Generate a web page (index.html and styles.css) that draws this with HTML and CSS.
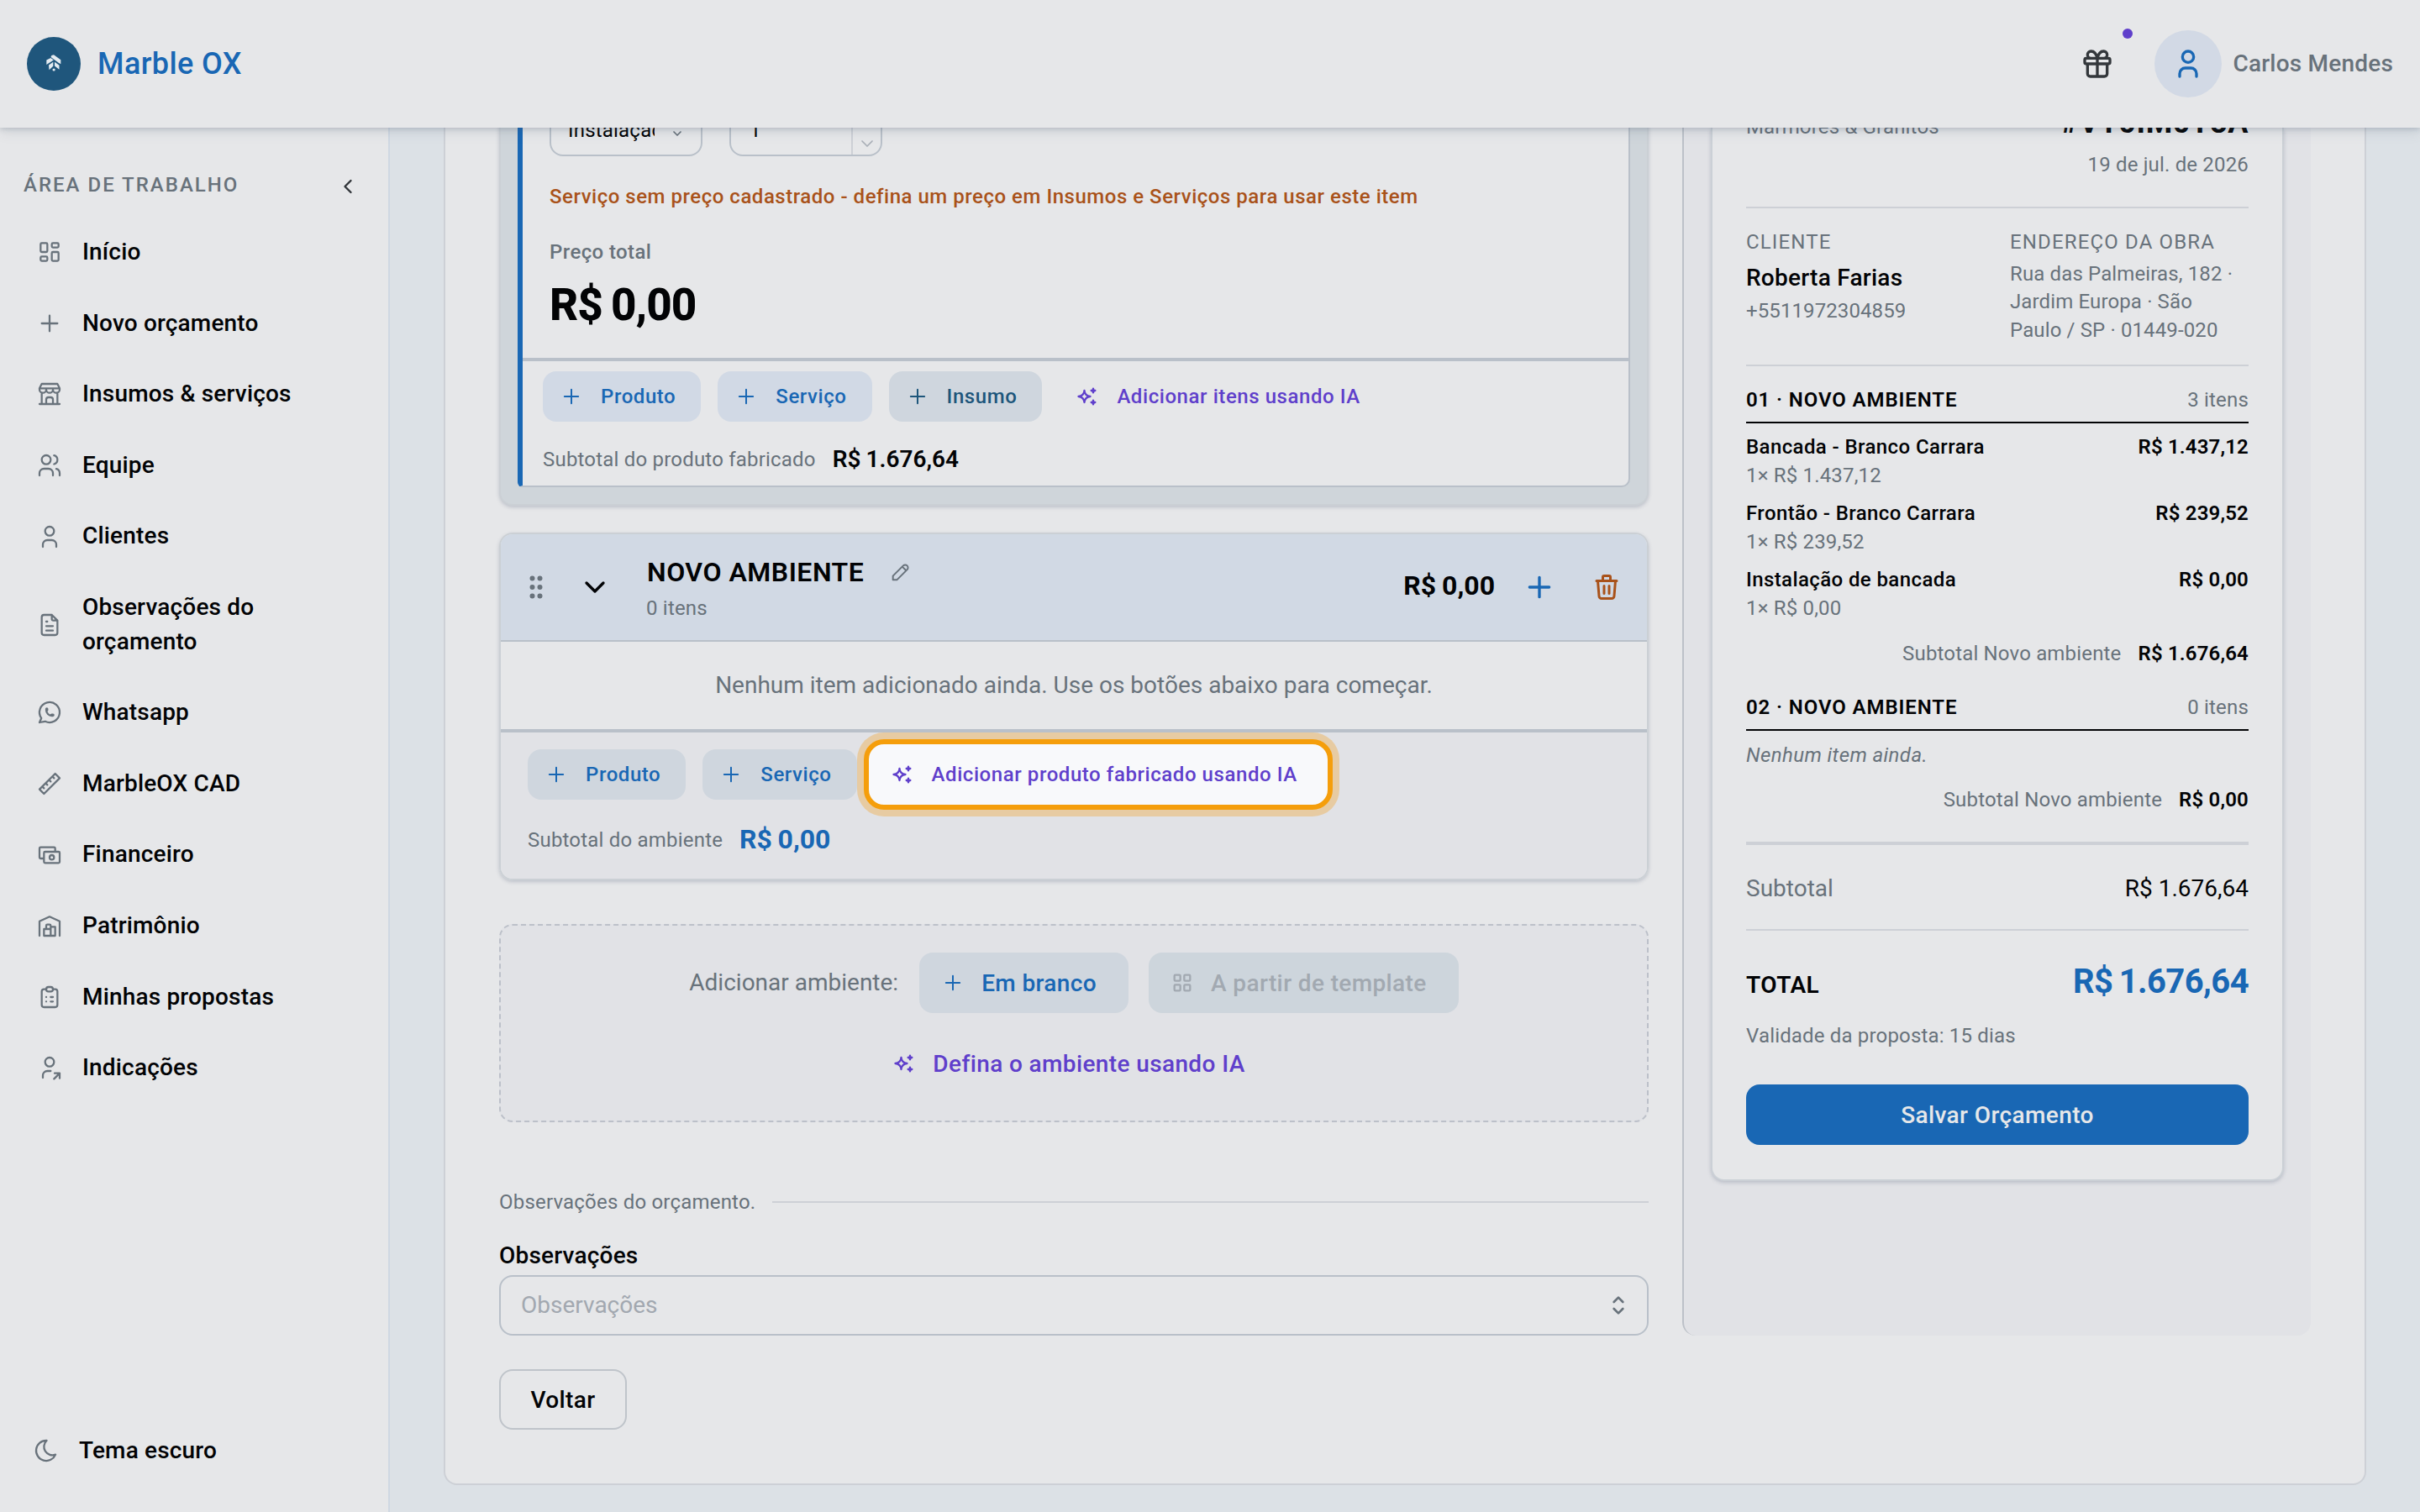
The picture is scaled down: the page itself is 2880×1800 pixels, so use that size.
FILE: index.html
```html
<!DOCTYPE html>
<html lang="pt-BR">
<head>
<meta charset="utf-8">
<title>Marble OX</title>
<link rel="stylesheet" href="styles.css">
</head>
<body>
<svg class="defs" aria-hidden="true">
  <symbol id="plus" viewBox="0 0 24 24"><path d="M12 5v14M5 12h14"/></symbol>
  <symbol id="sparkles" viewBox="0 0 24 24"><path d="M16 18a2 2 0 0 1 2 2a2 2 0 0 1 2 -2a2 2 0 0 1 -2 -2a2 2 0 0 1 -2 2zm0 -12a2 2 0 0 1 2 2a2 2 0 0 1 2 -2a2 2 0 0 1 -2 -2a2 2 0 0 1 -2 2zm-7 12a6 6 0 0 1 6 -6a6 6 0 0 1 -6 -6a6 6 0 0 1 -6 6a6 6 0 0 1 6 6z"/></symbol>
  <symbol id="user" viewBox="0 0 24 24"><path d="M8 7a4 4 0 1 0 8 0a4 4 0 0 0 -8 0M6 21v-2a4 4 0 0 1 4 -4h4a4 4 0 0 1 4 4v2"/></symbol>
  <symbol id="selector" viewBox="0 0 24 24"><path d="M8 9l4 -4l4 4M16 15l-4 4l-4 -4"/></symbol>
  <symbol id="chevron-down" viewBox="0 0 24 24"><path d="M6 9l6 6l6 -6"/></symbol>
</svg>

<header class="topbar">
  <div class="brand">
    <svg class="logo" viewBox="0 0 64 64"><circle cx="32" cy="32" r="32" fill="#1f567c"/><g fill="#e4ebf1"><path d="M29.300 22l2.700 -.700l8.300 6v5l-2.600 -1.600l-9.200 -6.600z"/><path d="M23.300 27.500l5 -2.600l3.500 2.600l-8.500 5.600z"/><path d="M26 33.500l5.300 -3.800v5l-4.800 4.600z"/><path d="M33 29.800l5.500 4v5l-5.500 -4.400z"/><circle cx="32.100" cy="39" r="1.600"/></g></svg>
    <span class="brand-name">Marble OX</span>
  </div>
  <div class="account">
    <div class="gift">
      <svg class="icon i40" viewBox="0 0 24 24"><path d="M3 9a1 1 0 0 1 1 -1h16a1 1 0 0 1 1 1v2a1 1 0 0 1 -1 1h-16a1 1 0 0 1 -1 -1zM12 8v13M19 12v7a2 2 0 0 1 -2 2h-10a2 2 0 0 1 -2 -2v-7M7.500 8a2.500 2.500 0 0 1 0 -5a4.800 8 0 0 1 4.500 5a4.800 8 0 0 1 4.500 -5a2.500 2.500 0 0 1 0 5"/></svg>
      <span class="dot"></span>
    </div>
    <div class="avatar"><svg class="icon i40"><use href="#user"/></svg></div>
    <span class="account-name">Carlos Mendes</span>
  </div>
</header>

<div class="layout">
  <aside class="sidebar">
    <div class="side-head"><span>ÁREA DE TRABALHO</span><svg class="icon i28" viewBox="0 0 24 24"><path d="M15 6l-6 6l6 6"/></svg></div>
    <nav class="nav">
      <a><svg class="icon thin i32" viewBox="0 0 24 24"><path d="M5 4h4a1 1 0 0 1 1 1v6a1 1 0 0 1 -1 1h-4a1 1 0 0 1 -1 -1v-6a1 1 0 0 1 1 -1M5 16h4a1 1 0 0 1 1 1v2a1 1 0 0 1 -1 1h-4a1 1 0 0 1 -1 -1v-2a1 1 0 0 1 1 -1M15 12h4a1 1 0 0 1 1 1v6a1 1 0 0 1 -1 1h-4a1 1 0 0 1 -1 -1v-6a1 1 0 0 1 1 -1M15 4h4a1 1 0 0 1 1 1v2a1 1 0 0 1 -1 1h-4a1 1 0 0 1 -1 -1v-2a1 1 0 0 1 1 -1"/></svg><span>Início</span></a>
      <a><svg class="icon thin i32"><use href="#plus"/></svg><span>Novo orçamento</span></a>
      <a><svg class="icon thin i32" viewBox="0 0 24 24"><path d="M3 21h18M3 7v1a3 3 0 0 0 6 0v-1m0 1a3 3 0 0 0 6 0v-1m0 1a3 3 0 0 0 6 0v-1h-18l2 -4h14l2 4M5 21v-10.150M19 21v-10.150M9 21v-4a2 2 0 0 1 2 -2h2a2 2 0 0 1 2 2v4"/></svg><span>Insumos &amp; serviços</span></a>
      <a><svg class="icon thin i32" viewBox="0 0 24 24"><path d="M5 7a4 4 0 1 0 8 0a4 4 0 1 0 -8 0M3 21v-2a4 4 0 0 1 4 -4h4a4 4 0 0 1 4 4v2M16 3.130a4 4 0 0 1 0 7.750M21 21v-2a4 4 0 0 0 -3 -3.850"/></svg><span>Equipe</span></a>
      <a><svg class="icon thin i32"><use href="#user"/></svg><span>Clientes</span></a>
      <a><svg class="icon thin i32" viewBox="0 0 24 24"><path d="M14 3v4a1 1 0 0 0 1 1h4M17 21h-10a2 2 0 0 1 -2 -2v-14a2 2 0 0 1 2 -2h7l5 5v11a2 2 0 0 1 -2 2zM9 9h1M9 13h6M9 17h6"/></svg><span>Observações do orçamento</span></a>
      <a><svg class="icon thin i32" viewBox="0 0 24 24"><path d="M3 21l1.650 -3.800a9 9 0 1 1 3.400 2.900l-5.050 .9M9 10a.5 .5 0 0 0 1 0v-1a.5 .5 0 0 0 -1 0v1a5 5 0 0 0 5 5h1a.5 .5 0 0 0 0 -1h-1a.5 .5 0 0 0 0 1"/></svg><span>Whatsapp</span></a>
      <a><svg class="icon thin i32" viewBox="0 0 24 24"><path d="M17 3l4 4l-14 14l-4 -4zM16 7l-1.500 -1.500M13 10l-1.500 -1.500M10 13l-1.500 -1.500M7 16l-1.500 -1.500"/></svg><span>MarbleOX CAD</span></a>
      <a><svg class="icon thin i32" viewBox="0 0 24 24"><path d="M7 15h-3a1 1 0 0 1 -1 -1v-8a1 1 0 0 1 1 -1h12a1 1 0 0 1 1 1v3M7 10a1 1 0 0 1 1 -1h12a1 1 0 0 1 1 1v8a1 1 0 0 1 -1 1h-12a1 1 0 0 1 -1 -1zM12 14a2 2 0 1 0 4 0a2 2 0 0 0 -4 0"/></svg><span>Financeiro</span></a>
      <a><svg class="icon thin i32" viewBox="0 0 24 24"><path d="M3 21v-13l9 -4l9 4v13M13 13h4v8h-10v-6h6M13 21v-9a1 1 0 0 0 -1 -1h-2a1 1 0 0 0 -1 1v3"/></svg><span>Patrimônio</span></a>
      <a><svg class="icon thin i32" viewBox="0 0 24 24"><path d="M9 5h-2a2 2 0 0 0 -2 2v12a2 2 0 0 0 2 2h10a2 2 0 0 0 2 -2v-12a2 2 0 0 0 -2 -2h-2M11 3h2a2 2 0 0 1 0 4h-2a2 2 0 0 1 0 -4zM9 12h.01M13 12h2M9 16h.01M13 16h2"/></svg><span>Minhas propostas</span></a>
      <a><svg class="icon thin i32" viewBox="0 0 24 24"><path d="M8 7a4 4 0 1 0 8 0a4 4 0 0 0 -8 0M6 21v-2a4 4 0 0 1 4 -4h3M16 22l5 -5M21 21.500v-4.500h-4.500"/></svg><span>Indicações</span></a>
    </nav>
    <div class="theme"><svg class="icon thin i32" viewBox="0 0 24 24"><path d="M12 3c.132 0 .263 0 .393 0a7.500 7.500 0 0 0 7.920 12.446a9 9 0 1 1 -8.313 -12.454z"/></svg><span>Tema escuro</span></div>
  </aside>

  <main class="main">
    <section class="sheet">
      <div class="columns">
        <div class="editor">
          <section class="env env-first">
            <div class="product">
              <div class="item">
                <div class="fields">
                  <div class="select-sm"><span class="clip">Instalação</span><svg class="icon thin i24"><use href="#selector"/></svg></div>
                  <div class="number"><span>1</span><div class="stepper"><svg class="icon thin i24"><use href="#chevron-down"/></svg></div></div>
                </div>
                <p class="warning">Serviço sem preço cadastrado - defina um preço em Insumos e Serviços para usar este item</p>
                <p class="price-label">Preço total</p>
                <p class="price">R$ 0,00</p>
              </div>
              <div class="product-foot">
                <div class="actions">
                  <button class="btn tonal"><svg class="icon thin i28"><use href="#plus"/></svg>Produto</button>
                  <button class="btn tonal"><svg class="icon thin i28"><use href="#plus"/></svg>Serviço</button>
                  <button class="btn neutral"><svg class="icon thin i28"><use href="#plus"/></svg>Insumo</button>
                  <button class="btn ai"><svg class="icon i28"><use href="#sparkles"/></svg>Adicionar itens usando IA</button>
                </div>
                <div class="subtotal"><span>Subtotal do produto fabricado</span><b class="sub-val">R$ 1.676,64</b></div>
              </div>
            </div>
          </section>

          <section class="env">
            <div class="env-head">
              <svg class="icon i36 grip" viewBox="0 0 24 24"><path d="M8 5a1 1 0 1 0 2 0a1 1 0 1 0 -2 0M8 12a1 1 0 1 0 2 0a1 1 0 1 0 -2 0M8 19a1 1 0 1 0 2 0a1 1 0 1 0 -2 0M14 5a1 1 0 1 0 2 0a1 1 0 1 0 -2 0M14 12a1 1 0 1 0 2 0a1 1 0 1 0 -2 0M14 19a1 1 0 1 0 2 0a1 1 0 1 0 -2 0"/></svg>
              <svg class="icon i40 toggle"><use href="#chevron-down"/></svg>
              <div class="env-title">
                <div class="title-row"><h2>NOVO AMBIENTE</h2><svg class="icon thin i28" viewBox="0 0 24 24"><path d="M4 20h4l10.500 -10.500a2.828 2.828 0 1 0 -4 -4l-10.500 10.500v4M13.500 6.500l4 4"/></svg></div>
                <span class="count">0 itens</span>
              </div>
              <b class="env-price">R$ 0,00</b>
              <svg class="icon i40 add"><use href="#plus"/></svg>
              <svg class="icon i36 trash" viewBox="0 0 24 24"><path d="M4 7h16M10 11v6M14 11v6M5 7l1 12a2 2 0 0 0 2 2h8a2 2 0 0 0 2 -2l1 -12M9 7v-3a1 1 0 0 1 1 -1h4a1 1 0 0 1 1 1v3"/></svg>
            </div>
            <div class="env-empty">Nenhum item adicionado ainda. Use os botões abaixo para começar.</div>
            <div class="env-foot">
              <div class="actions">
                <button class="btn neutral blue"><svg class="icon thin i28"><use href="#plus"/></svg>Produto</button>
                <button class="btn neutral blue"><svg class="icon thin i28"><use href="#plus"/></svg>Serviço</button>
                <button class="btn ai spotlight"><svg class="icon i28"><use href="#sparkles"/></svg><span class="long">Adicionar produto fabricado usando IA</span></button>
              </div>
              <div class="subtotal"><span>Subtotal do ambiente</span><b class="env-val">R$ 0,00</b></div>
            </div>
          </section>

          <section class="add-env">
            <div class="add-row">
              <span class="add-label">Adicionar ambiente:</span>
              <button class="btn lg neutral blue"><svg class="icon thin i28"><use href="#plus"/></svg>Em branco</button>
              <button class="btn lg disabled"><svg class="icon i28" viewBox="0 0 24 24"><path d="M5 4h4a1 1 0 0 1 1 1v4a1 1 0 0 1 -1 1h-4a1 1 0 0 1 -1 -1v-4a1 1 0 0 1 1 -1zM15 4h4a1 1 0 0 1 1 1v4a1 1 0 0 1 -1 1h-4a1 1 0 0 1 -1 -1v-4a1 1 0 0 1 1 -1zM5 14h4a1 1 0 0 1 1 1v4a1 1 0 0 1 -1 1h-4a1 1 0 0 1 -1 -1v-4a1 1 0 0 1 1 -1zM15 14h4a1 1 0 0 1 1 1v4a1 1 0 0 1 -1 1h-4a1 1 0 0 1 -1 -1v-4a1 1 0 0 1 1 -1z"/></svg>A partir de template</button>
            </div>
            <button class="btn lg ai"><svg class="icon i28"><use href="#sparkles"/></svg>Defina o ambiente usando IA</button>
          </section>

          <div class="divider"><span>Observações do orçamento.</span></div>
          <label class="label">Observações</label>
          <div class="select"><span>Observações</span><svg class="icon i32"><use href="#selector"/></svg></div>
        </div>

        <aside class="preview">
          <div class="paper">
            <div class="doc-head">
              <span>Mármores &amp; Granitos</span>
              <div class="doc-id"><b>#VT0IM0T8A</b><span>19 de jul. de 2026</span></div>
            </div>
            <div class="parties">
              <div>
                <div class="cap">CLIENTE</div>
                <div class="client">Roberta Farias</div>
                <div class="phone">+5511972304859</div>
              </div>
              <div class="place">
                <div class="cap">ENDEREÇO DA OBRA</div>
                <div class="address">Rua das Palmeiras, 182 ·<br>Jardim Europa · São<br>Paulo / SP · 01449-020</div>
              </div>
            </div>
            <div class="group-head"><b>01 · NOVO AMBIENTE</b><span>3 itens</span></div>
            <div class="line"><div><div class="line-name">Bancada - Branco Carrara</div><div>1× R$ 1.437,12</div></div><b>R$ 1.437,12</b></div>
            <div class="line"><div><div class="line-name">Frontão - Branco Carrara</div><div>1× R$ 239,52</div></div><b>R$ 239,52</b></div>
            <div class="line"><div><div class="line-name">Instalação de bancada</div><div>1× R$ 0,00</div></div><b>R$ 0,00</b></div>
            <div class="group-sub"><span>Subtotal Novo ambiente</span><b>R$ 1.676,64</b></div>
            <div class="group-head second"><b>02 · NOVO AMBIENTE</b><span>0 itens</span></div>
            <div class="none">Nenhum item ainda.</div>
            <div class="group-sub last"><span>Subtotal Novo ambiente</span><b>R$ 0,00</b></div>
            <div class="sum"><span>Subtotal</span><span class="sum-val">R$ 1.676,64</span></div>
            <div class="total"><b>TOTAL</b><b class="total-val">R$ 1.676,64</b></div>
            <div class="validity">Validade da proposta: 15 dias</div>
            <button class="save">Salvar Orçamento</button>
          </div>
        </aside>
      </div>
      <button class="back">Voltar</button>
    </section>
  </main>
</div>
</body>
</html>
```
FILE: styles.css
```css
:root {
  --bg: #e6e7e9;
  --dim: #e1e2e6;
  --line: #cdd0d6;
  --line-strong: #b9c0c9;
  --text: #020305;
  --muted: #68727b;
  --blue: #1967b4;
  --purple: #5f3fcb;
}
* { box-sizing: border-box; }
body {
  margin: 0;
  width: 2880px;
  height: 1800px;
  overflow: hidden;
  display: flex;
  flex-direction: column;
  background: var(--bg);
  color: var(--text);
  font-family: Roboto, "Liberation Sans", sans-serif;
  font-size: 28px;
  line-height: 1.45;
}
p, h2 { margin: 0; }
button { font-family: inherit; border: 0; }
.defs { position: absolute; width: 0; height: 0; }
.icon {
  display: block;
  flex: none;
  fill: none;
  stroke: currentColor;
  stroke-width: 2;
  stroke-linecap: round;
  stroke-linejoin: round;
}
.thin { stroke-width: 1.7; }
.i24 { width: 24px; height: 24px; }
.i28 { width: 28px; height: 28px; }
.i32 { width: 32px; height: 32px; }
.i36 { width: 36px; height: 36px; }
.i40 { width: 40px; height: 40px; }

/* Top bar */
.topbar {
  position: relative;
  z-index: 5;
  flex: none;
  height: 152px;
  padding: 0 32px;
  display: flex;
  align-items: center;
  justify-content: space-between;
  background: var(--bg);
  box-shadow: 0 2px 6px rgba(70, 85, 110, .22), 0 6px 14px rgba(70, 85, 110, .1);
}
.brand { display: flex; align-items: center; gap: 20px; }
.logo { width: 64px; height: 64px; }
.brand-name { font-size: 36px; font-weight: 500; color: var(--blue); letter-spacing: .4px; }
.account { display: flex; align-items: center; color: var(--muted); font-weight: 500; }
.account-name { padding-top: 1px; letter-spacing: .2px; }
.gift { position: relative; color: #33373b; margin-right: 48px; }
.dot { position: absolute; left: 50px; top: -22px; width: 12px; height: 12px; border-radius: 50%; background: var(--purple); }
.avatar {
  width: 80px;
  height: 80px;
  margin-right: 13px;
  border-radius: 50%;
  display: grid;
  place-items: center;
  background: #d2d9e5;
  color: var(--blue);
}

/* Sidebar */
.layout { flex: 1; min-height: 0; display: flex; }
.sidebar {
  flex: none;
  width: 464px;
  border-right: 2px solid #cfd8e3;
  display: flex;
  flex-direction: column;
  font-weight: 500;
  letter-spacing: .17px;
}
.side-head {
  height: 56px;
  margin: 40px 34px 10px 28px;
  display: flex;
  align-items: center;
  justify-content: space-between;
  font-size: 24px;
  letter-spacing: 2px;
  color: var(--muted);
}
.side-head .icon { color: #2f3338; position: relative; top: 2px; }
.nav a {
  display: flex;
  align-items: center;
  gap: 23px;
  padding: 22px 100px 22px 43px;
  line-height: 40.6px;
}
.nav .icon, .theme .icon { color: var(--muted); }
.theme { margin-top: auto; margin-bottom: 43px; height: 60px; padding-left: 39px; display: flex; align-items: center; gap: 23px; }

/* Page sheet */
.main { flex: 1; min-width: 0; overflow: hidden; padding: 0 64px 32px; background: #dce1e6; display: flex; }
.sheet {
  flex: 1;
  padding: 0 64px 64px;
  border: 2px solid var(--line);
  border-top: 0;
  border-radius: 0 0 16px 16px;
  background: var(--bg);
}
.columns { display: flex; gap: 40px; height: 1438px; }
.editor { width: 1368px; margin-top: -38px; }
.env {
  border: 2px solid #cbd0d5;
  border-radius: 16px;
  margin-bottom: 32px;
  overflow: hidden;
  box-shadow: 0 2px 4px rgba(70, 85, 110, .25);
}
.env-first { border-top: 0; border-radius: 0 0 16px 16px; padding: 0 20px 20px; background: #cfd5da; }
.product {
  border: solid var(--line-strong);
  border-width: 0 2px 2px 0;
  border-left: 6px solid var(--blue);
  border-radius: 0 0 10px 6px;
  background: var(--bg);
}
.item { height: 316px; padding-left: 32px; border-bottom: 4px solid var(--line-strong); }
.fields { display: flex; gap: 32px; }
.select-sm, .number { width: 182px; height: 72px; border: 2px solid var(--line-strong); border-radius: 16px; display: flex; align-items: center; font-size: 24px; }
.select-sm { padding-left: 20px; gap: 15px; }
.clip { width: 103px; overflow: hidden; line-height: 40px; margin-top: 10px; letter-spacing: .2px; }
.select-sm .icon { color: var(--muted); margin-top: 8px; }
.number { padding-left: 22px; justify-content: space-between; }
.number > span { margin-top: 10px; }
.stepper { align-self: stretch; width: 35px; border-left: 2px solid var(--line); display: flex; align-items: flex-end; justify-content: center; padding-bottom: 1px; color: #a9afb7; }
.warning { margin-top: 31px; font-size: 24px; line-height: 35px; font-weight: 500; color: #a9521a; letter-spacing: .52px; }
.price-label { margin-top: 31px; font-size: 24px; line-height: 34px; font-weight: 500; color: var(--muted); letter-spacing: .4px; }
.price { margin-top: 16px; font-size: 53px; line-height: 60px; font-weight: 800; letter-spacing: -1px; word-spacing: -2px; }
.product-foot { padding: 12px 24px 11px; }
.actions { display: flex; gap: 20px; }
.btn {
  height: 60px;
  padding: 0 30px 0 20px;
  border-radius: 16px;
  display: flex;
  align-items: center;
  gap: 21px;
  font-size: 24px;
  font-weight: 500;
  letter-spacing: .57px;
  white-space: nowrap;
  background: none;
  color: var(--blue);
}
.btn.tonal { background: #d1d9e5; }
.btn.neutral { background: #cfd6de; color: #1d567b; }
.btn.blue { color: var(--blue); }
.btn.ai { color: var(--purple); }
.btn.lg { height: 72px; padding: 0 38px 0 26px; gap: 20px; font-size: 28px; letter-spacing: .38px; }
.btn.disabled { background: #cdd5dc; color: #a2a9b1; }
.spotlight { position: relative; }
.spotlight::before {
  content: "";
  position: absolute;
  z-index: 1;
  inset: -12px;
  border: 6px solid #f59e0b;
  border-radius: 24px;
  background: #f8f9fb;
  box-shadow: 0 0 0 8px #e7cba2;
}
.spotlight > * { position: relative; z-index: 2; }
.subtotal { display: flex; align-items: center; gap: 20px; height: 40px; margin-top: 25px; font-size: 24px; color: var(--muted); letter-spacing: .2px; }
.sub-val { font-size: 28px; font-weight: 600; color: var(--text); letter-spacing: 0; word-spacing: -1px; }

.env-head { height: 128px; border-bottom: 2px solid var(--line-strong); background: #d1d9e4; display: flex; align-items: center; padding: 0 30px 0 24px; }
.grip { color: var(--muted); margin-right: 32px; }
.toggle { margin-right: 42px; }
.env-title { flex: 1; display: flex; flex-direction: column; gap: 4px; padding-top: 4px; }
.title-row { display: flex; align-items: center; gap: 30px; height: 42px; }
.title-row .icon { color: var(--muted); }
h2 { font-size: 32px; font-weight: 600; line-height: 42px; letter-spacing: .5px; }
.count { margin-left: -1px; font-size: 24px; line-height: 36px; color: var(--muted); letter-spacing: .2px; }
.env-price { font-size: 32px; font-weight: 700; margin-right: 33px; letter-spacing: 0; word-spacing: -1px; padding-bottom: 3px; }
.add { color: var(--blue); margin-right: 42px; }
.trash { color: #a9521a; }
.env-empty { height: 108px; border-bottom: 4px solid var(--line-strong); display: grid; place-items: center; padding-top: 1px; color: var(--muted); }
.env-foot { height: 174px; padding: 20px 32px; background: var(--dim); }
.env-foot .subtotal { margin-top: 28px; }
.env-val { font-size: 32px; font-weight: 700; color: var(--blue); letter-spacing: -.1px; word-spacing: -1px; padding-bottom: 1px; }

.add-env {
  margin-top: 52px;
  height: 236px;
  padding: 32px 0;
  border: 2px dashed #bcc0c9;
  border-radius: 16px;
  background: var(--dim);
  display: flex;
  flex-direction: column;
  align-items: center;
  gap: 24px;
}
.add-row { display: flex; align-items: center; gap: 24px; }
.add-label { color: var(--muted); margin-right: 1px; padding-top: 1px; }
.divider { margin-top: 75px; height: 40px; display: flex; align-items: center; gap: 20px; font-size: 24px; font-weight: 400; color: var(--muted); letter-spacing: .2px; }
.divider::after { content: ""; flex: 1; height: 2px; background: var(--line); }
.label { display: block; margin-top: 24px; line-height: 40px; font-weight: 500; letter-spacing: .2px; }
.select { margin-top: 3px; height: 72px; padding: 0 18px 0 24px; border: 2px solid var(--line-strong); border-radius: 16px; display: flex; align-items: center; justify-content: space-between; color: #a2a8b0; }
.select .icon { color: var(--muted); }
.back { margin-top: 40px; width: 152px; height: 72px; border: 2px solid #bfc4ca; border-radius: 16px; background: none; color: var(--text); font-size: 28px; font-weight: 500; letter-spacing: .35px; }

/* Document preview */
.preview { width: 748px; padding: 0 32px; border-left: 2px solid #bcc1c8; border-radius: 0 0 16px 16px; background: var(--dim); }
.paper {
  height: 1254px;
  padding: 0 40px;
  border: 2px solid #cbd0d6;
  border-top: 0;
  border-radius: 0 0 16px 16px;
  background: var(--bg);
  box-shadow: 0 2px 4px rgba(70, 85, 110, .25);
  color: var(--muted);
  font-size: 24px;
  line-height: 34px;
  letter-spacing: .17px;
}
.paper b { font-weight: 600; color: var(--text); }
.doc-head { height: 96px; border-bottom: 2px solid var(--line); display: flex; justify-content: space-between; }
.doc-head > span { margin-top: -18px; }
.doc-id { display: flex; flex-direction: column; align-items: flex-end; margin-top: -27px; }
.doc-id b { font-size: 36px; font-weight: 700; line-height: 42px; letter-spacing: .6px; }
.doc-id span { margin-top: 12px; }
.parties { display: grid; grid-template-columns: 1fr 1fr; gap: 30px; height: 188px; padding-top: 23px; border-bottom: 2px solid var(--line); }
.cap { letter-spacing: 1.150px; }
.client { margin-top: 6px; font-size: 28px; line-height: 40px; font-weight: 500; color: var(--text); letter-spacing: .25px; }
.phone { margin-top: 2px; letter-spacing: .1px; }
.address { margin-top: 5px; line-height: 33.300px; letter-spacing: .13px; }
.group-head { margin-top: 20px; height: 48px; padding-top: 3px; border-bottom: 2px solid var(--text); display: flex; justify-content: space-between; }
.group-head b { letter-spacing: .9px; }
.line { display: flex; justify-content: space-between; margin-bottom: 10px; padding-top: 1px; }
.group-head + .line { margin-top: 10px; }
.line-name { color: var(--text); font-weight: 500; letter-spacing: .4px; }
.group-sub { display: flex; justify-content: flex-end; gap: 20px; margin-top: 20px; }
.group-head.second { margin-top: 27px; }
.none { margin-top: 12px; font-style: italic; letter-spacing: .4px; }
.group-sub.last { margin-top: 19px; padding-bottom: 33px; border-bottom: 4px solid var(--line); }
.sum { height: 102px; border-bottom: 2px solid var(--line); padding-top: 4px; display: flex; align-items: center; justify-content: space-between; font-size: 28px; letter-spacing: 0; }
.sum-val { color: var(--text); }
.total { display: flex; justify-content: space-between; align-items: baseline; margin-top: 34px; line-height: 54px; font-size: 28px; letter-spacing: .4px; }
.total-val.total-val { font-size: 40px; font-weight: 700; color: var(--blue); letter-spacing: -.6px; word-spacing: -2px; }
.validity { margin-top: 16px; }
.save { margin-top: 41px; width: 100%; height: 72px; border-radius: 16px; background: #1967b4; color: #e6e7e9; font-size: 28px; font-weight: 500; letter-spacing: .4px; }
```
